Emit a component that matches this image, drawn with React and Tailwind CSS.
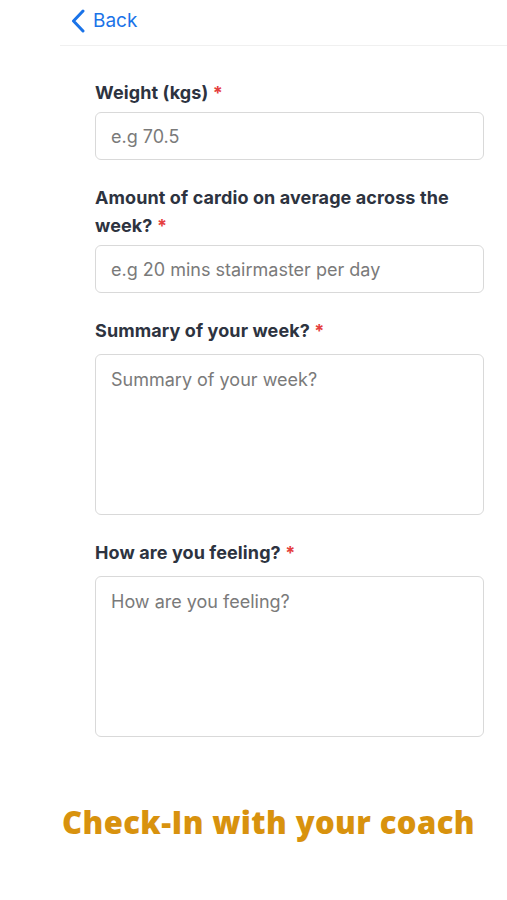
import React from "react";

function Label({ children }) {
  return (
    <div className="text-[18px] leading-[28px] font-bold tracking-[0.1px] text-[#2d3340]">
      {children} <span className="text-[#e53e3e]">*</span>
    </div>
  );
}

export default function App() {
  return (
    <div className="w-[507px] h-[900px] bg-white font-['Inter',sans-serif] overflow-hidden">
      <div className="ml-[60px] h-[46px] border-b border-[#f0f0f0] flex items-center pl-[10px]">
        <svg width="17" height="24" viewBox="0 0 17 24" className="mt-[-3px]">
          <path d="M13 2 L3.5 12 L13 22" fill="none" stroke="#1a73e8" strokeWidth="3" strokeLinecap="round" strokeLinejoin="round" />
        </svg>
        <span className="ml-[6px] mt-[-3px] text-[19px] text-[#1a73e8]">Back</span>
      </div>
      <div className="px-[95px] pr-[23px] pt-[33px]">
        <Label>Weight (kgs)</Label>
        <div className="mt-[5px] h-[48px] rounded-[6px] border border-[#d9d9d9] flex items-center px-[15px] text-[18px] text-[#7a7a7a]">
          e.g 70.5
        </div>
        <div className="mt-[24px]">
          <Label>Amount of cardio on average across the week?</Label>
        </div>
        <div className="mt-[5px] h-[48px] rounded-[6px] border border-[#d9d9d9] flex items-center px-[15px] text-[18px] text-[#7a7a7a]">
          e.g 20 mins stairmaster per day
        </div>
        <div className="mt-[24px]">
          <Label>Summary of your week?</Label>
        </div>
        <div className="mt-[9px] h-[161px] rounded-[6px] border border-[#d9d9d9] px-[15px] pt-[12px] text-[18px] leading-[26px] text-[#7a7a7a]">
          Summary of your week?
        </div>
        <div className="mt-[24px]">
          <Label>How are you feeling?</Label>
        </div>
        <div className="mt-[9px] h-[161px] rounded-[6px] border border-[#d9d9d9] px-[15px] pt-[12px] text-[18px] leading-[26px] text-[#7a7a7a]">
          How are you feeling?
        </div>
      </div>
      <div className="mt-[65px] pl-[62px] text-[31px] leading-[40px] tracking-[0.4px] font-extrabold text-[#d8920e] font-['Open_Sans',sans-serif]">
        Check-In with your coach
      </div>
    </div>
  );
}
